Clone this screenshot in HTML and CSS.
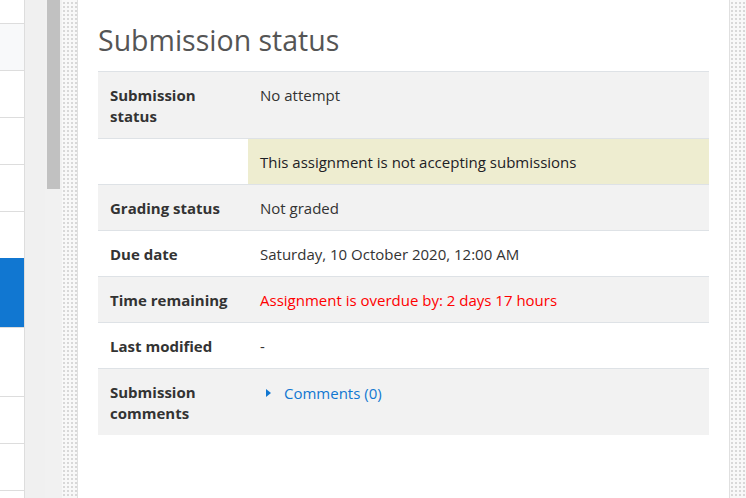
FILE: index.html
```html
<!DOCTYPE html>
<html lang="en">
<head>
<meta charset="utf-8">
<title>Submission status</title>
<link rel="stylesheet" href="styles.css">
</head>
<body>
<div class="page">
  <nav class="nav">
    <div class="nav-item nav-top"></div>
    <div class="nav-item nav-light"></div>
    <div class="nav-item"></div>
    <div class="nav-item"></div>
    <div class="nav-item"></div>
    <div class="nav-item"></div>
    <div class="nav-item nav-tall nav-active"></div>
    <div class="nav-item nav-tall"></div>
    <div class="nav-item"></div>
    <div class="nav-item"></div>
  </nav>
  <div class="gutter"></div>
  <div class="scrollbar"><div class="thumb"></div></div>
  <div class="dots"></div>
  <main class="main">
    <h2 class="title">Submission status</h2>
    <table class="status">
      <tbody>
        <tr class="striped">
          <th>Submission status</th>
          <td>No attempt</td>
        </tr>
        <tr>
          <th></th>
          <td class="notice">This assignment is not accepting submissions</td>
        </tr>
        <tr class="striped">
          <th>Grading status</th>
          <td>Not graded</td>
        </tr>
        <tr>
          <th>Due date</th>
          <td>Saturday, 10 October 2020, 12:00 AM</td>
        </tr>
        <tr class="striped">
          <th>Time remaining</th>
          <td class="overdue">Assignment is overdue by: 2 days 17 hours</td>
        </tr>
        <tr>
          <th>Last modified</th>
          <td>-</td>
        </tr>
        <tr class="striped">
          <th>Submission comments</th>
          <td><a class="comments" href="#"><svg class="caret" width="8" height="10" viewBox="0 0 8 10"><path d="M1 1 L6 5 L1 9 Z" fill="currentColor"/></svg><span>Comments (0)</span></a></td>
        </tr>
      </tbody>
    </table>
  </main>
  <div class="dots dots-right"></div>
</div>
</body>
</html>
```
FILE: styles.css
```css
html, body {
  margin: 0;
  padding: 0;
  height: 100%;
  overflow: hidden;
  background: #fff;
}
body {
  font-family: "Open Sans", "Noto Sans", sans-serif;
  font-size: 15px;
  line-height: 21px;
  color: #1d2125;
}
.page {
  display: flex;
  height: 498px;
  width: 746px;
}
.nav {
  width: 24px;
  flex: none;
  border-right: 1px solid #dddddd;
  background: #fff;
  display: flex;
  flex-direction: column;
}
.nav-item {
  height: 46px;
  flex: none;
  border-bottom: 1px solid #dddddd;
}
.nav-top { height: 23px; }
.nav-light { background: #f8f9fa; }
.nav-tall { height: 68px; }
.nav-active { background: #1177d1; margin-top: -1px; height: 69px; }
.gutter {
  width: 20px;
  flex: none;
  background: #f0f0f0;
}
.scrollbar {
  width: 17px;
  flex: none;
  background: #f1f1f1;
  padding: 0 2px;
  box-sizing: border-box;
}
.thumb {
  height: 189px;
  background: #c1c1c1;
}
.dots {
  width: 15px;
  flex: none;
  background-color: #f8f8f8;
  background-image: radial-gradient(circle, #d8d8d8 0.8px, transparent 1px);
  background-size: 4px 4px;
  background-position: 0 1px;
}
.dots-right {
  width: 16px;
}
.main {
  flex: none;
  border-left: 1px solid #e0e0e0;
  border-right: 1px solid #e0e0e0;
  background: #fff;
  padding: 0 20px;
  box-sizing: content-box;
  width: 611px;
}
.title {
  margin: 22px 0 12px;
  font-size: 28.5px;
  line-height: 37px;
  font-weight: 400;
  color: #555;
}
.status {
  width: 611px;
  border-collapse: collapse;
}
.status th, .status td {
  border-top: 1px solid #dee2e6;
  padding: 13px 12px 11px;
  vertical-align: top;
  text-align: left;
}
.status th {
  width: 126px;
  font-weight: 700;
  color: #333;
}
.status td {
  color: #333;
}
.striped th, .striped td {
  background: #f2f2f2;
}
.status td.notice {
  background: #eeedd0;
  color: #1d2125;
}
.status td.overdue {
  color: #ff0000;
}
.comments {
  color: #1177d1;
  text-decoration: none;
  display: inline-flex;
  align-items: center;
  gap: 11px;
  padding-left: 5px;
}
.caret {
  display: block;
}
```
